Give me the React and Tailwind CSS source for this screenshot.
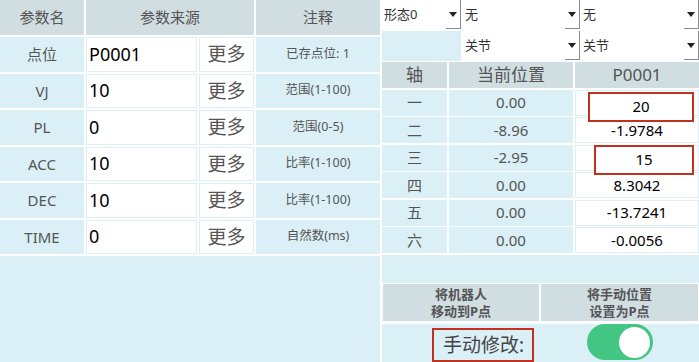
import { useState } from 'react';

const params = [
    { name: '点位', value: 'P0001', note: '已存点位: 1' },
    { name: 'VJ', value: '10', note: '范围(1-100)' },
    { name: 'PL', value: '0', note: '范围(0-5)' },
    { name: 'ACC', value: '10', note: '比率(1-100)' },
    { name: 'DEC', value: '10', note: '比率(1-100)' },
    { name: 'TIME', value: '0', note: '自然数(ms)' },
];

const axes = [
    { axis: '一', cur: '0.00', p: '20', edit: 'left-[12px] w-[106px] top-[1px]' },
    { axis: '二', cur: '-8.96', p: '-1.9784' },
    { axis: '三', cur: '-2.95', p: '15', edit: 'left-[18px] w-[100px] top-[-1px]' },
    { axis: '四', cur: '0.00', p: '8.3042' },
    { axis: '五', cur: '0.00', p: '-13.7241' },
    { axis: '六', cur: '0.00', p: '-0.0056' },
];

function Select({ label, className }) {
    return (
        <div className={`bg-white flex items-stretch ${className}`}>
            <span className="flex-1 flex items-center pl-[2px] text-[13px] text-[#333]">{label}</span>
            <span className="w-[15px] h-[29px] flex items-center justify-center border-r-[1.5px] border-b-[1.5px] border-[#8a8a8a]">
                <svg width="8" height="5" viewBox="0 0 8 5"><path d="M0 0h8L4 5z" fill="#222" /></svg>
            </span>
        </div>
    );
}

export default function App() {
    const [manual, setManual] = useState(true);

    return (
        <div className="w-[699px] h-[362px] bg-white flex gap-[2px] overflow-hidden font-['Noto_Sans','Noto_Sans_CJK_SC',sans-serif] text-[#555]">
            {/* Left: parameters */}
            <div className="w-[380px] flex flex-col">
                <div className="grid grid-cols-[84px_111px_55px_124px] gap-[2px] h-[35px] text-[15px]">
                    <div className="bg-[#d0dde1] flex items-center justify-center">参数名</div>
                    <div className="col-span-2 bg-[#d0dde1] flex items-center justify-center">参数来源</div>
                    <div className="bg-[#d0dde1] flex items-center justify-center">注释</div>
                </div>
                {params.map((p) => (
                    <div key={p.name} className="grid grid-cols-[84px_111px_55px_124px] gap-[2px] h-[34.5px] mt-[2px]">
                        <div className="bg-[#daf0f6] flex items-center justify-center text-[15px]">{p.name}</div>
                        <div className="bg-white border border-[#daf0f6] flex items-center pl-[2px] text-[18px] text-black">{p.value}</div>
                        <div className="bg-white border border-[#daf0f6] flex items-center justify-center text-[19px]">更多</div>
                        <div className="bg-[#daf0f6] flex items-center justify-center text-[12.5px]">{p.note}</div>
                    </div>
                ))}
                <div className="flex-1 bg-[#daf0f6] mt-[2px]" />
            </div>

            {/* Right: axes */}
            <div className="flex-1 flex flex-col">
                <div className="flex h-[30px] shrink-0">
                    <Select label="形态0" className="w-[79px]" />
                    <Select label="无" className="w-[117px] ml-[2px]" />
                    <Select label="无" className="w-[118px] ml-[1px]" />
                </div>
                <div className="flex h-[30px] mt-[1px] shrink-0">
                    <div className="w-[79px] bg-[#daf0f6]" />
                    <Select label="关节" className="w-[117px] ml-[2px]" />
                    <Select label="关节" className="w-[118px] ml-[1px]" />
                </div>
                <div className="grid grid-cols-[65px_124px_124px] grid-rows-[26px] gap-[2px] h-[26px] mt-[1px] text-[17px] shrink-0">
                    <div className="bg-[#d0dde1] flex items-center justify-center">轴</div>
                    <div className="bg-[#d0dde1] flex items-center justify-center">当前位置</div>
                    <div className="bg-[#d0dde1] flex items-center justify-center">P0001</div>
                </div>
                {axes.map((a) => (
                    <div key={a.axis} className="grid grid-cols-[65px_124px_124px] grid-rows-[26px] gap-x-[2px] h-[26px] mt-[1.5px] text-[15px] shrink-0">
                        <div className="bg-[#daf0f6] flex items-center justify-center">{a.axis}</div>
                        <div className="bg-[#daf0f6] flex items-center justify-center">{a.cur}</div>
                        <div className="relative bg-white border border-[#daf0f6] flex items-center justify-center text-black">
                            {a.edit ? (
                                <div className={`absolute h-[30px] bg-white border-[2.5px] border-[#c2301f] flex items-center justify-center z-10 ${a.edit}`}>
                                    {a.p}
                                </div>
                            ) : (
                                a.p
                            )}
                        </div>
                    </div>
                ))}
                <div className="h-[28px] bg-[#daf0f6] mt-[2px] shrink-0" />
                <div className="flex h-[39px] bg-[#daf0f6] shrink-0">
                    <button className="w-[158px] border border-white bg-[#d0dde1] text-[13px] font-bold leading-[17px] text-[#555]">
                        将机器人<br />移动到P点
                    </button>
                    <button className="flex-1 border border-white bg-[#d0dde1] text-[13px] font-bold leading-[17px] text-[#555]">
                        将手动位置<br />设置为P点
                    </button>
                </div>
                <div className="flex-1 flex bg-[#daf0f6] mt-[2px]">
                    <div className="w-[158px] flex justify-end items-start pt-[4px] pr-[6px]">
                        <span className="h-[34px] w-[102px] border-[2.5px] border-[#c2301f] flex items-center pl-[9px] text-[19px] text-[#444] whitespace-nowrap">
                            手动修改:
                        </span>
                    </div>
                    <div className="flex-1 flex justify-center">
                        <button
                            onClick={() => setManual(!manual)}
                            className={`w-[66px] h-[36px] rounded-full flex items-center px-[3px] ${manual ? 'bg-[#43c584] justify-end' : 'bg-gray-300 justify-start'}`}
                        >
                            <span className="w-[31px] h-[31px] rounded-full bg-white" />
                        </button>
                    </div>
                </div>
            </div>
        </div>
    );
}
